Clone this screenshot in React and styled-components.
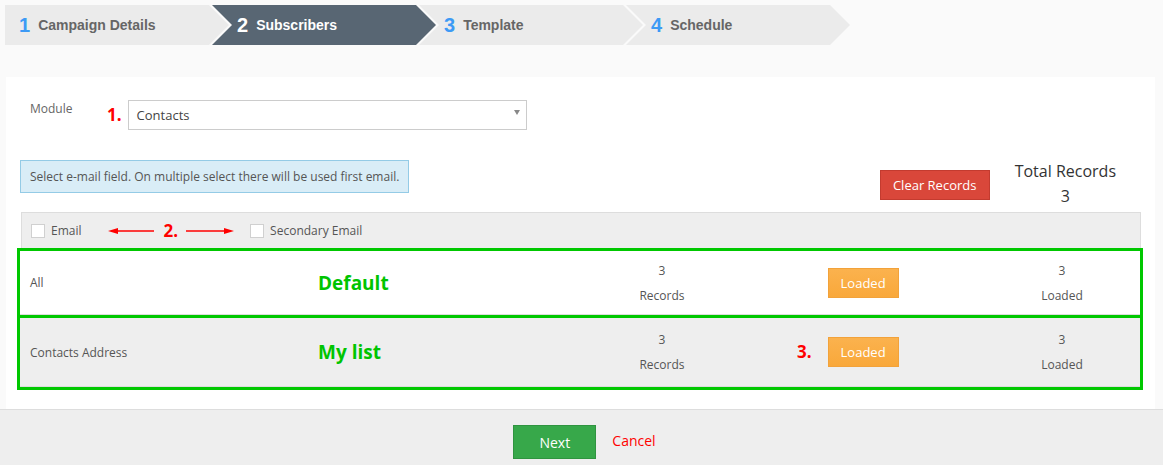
import React from "react";
import styled, { createGlobalStyle } from "styled-components";

const GlobalStyle = createGlobalStyle`
  html, body {
    margin: 0;
    padding: 0;
    background: #fafafa;
    font-family: "Open Sans", "Liberation Sans", Arial, sans-serif;
    color: #555;
  }
  * { box-sizing: border-box; }
`;

const Wizard = styled.div`
  display: flex;
  padding: 5px 0 0 5px;
  height: 45px;
`;

const Step = styled.div`
  width: 224px;
  height: 40px;
  margin-left: ${(p) => (p.$first ? 0 : -17)}px;
  padding-left: ${(p) => (p.$first ? 14 : 25)}px;
  display: flex;
  align-items: center;
  gap: 8px;
  background: ${(p) => (p.$active ? "#586673" : "#ebebeb")};
  clip-path: ${(p) =>
    p.$first
      ? "polygon(0 0, calc(100% - 20px) 0, 100% 50%, calc(100% - 20px) 100%, 0 100%)"
      : "polygon(0 0, calc(100% - 20px) 0, 100% 50%, calc(100% - 20px) 100%, 0 100%, 20px 50%)"};
  font-family: "Liberation Sans", Arial, sans-serif;
`;

const StepNum = styled.span`
  font-size: 20px;
  font-weight: bold;
  color: ${(p) => (p.$active ? "#fff" : "#3d9af5")};
`;

const StepLabel = styled.span`
  font-size: 14px;
  font-weight: bold;
  color: ${(p) => (p.$active ? "#fff" : "#666")};
`;

const Panel = styled.div`
  margin: 32px 8px 0 6px;
  background: #fff;
  padding: 23px 14px 19px 14px;
`;

const ModuleRow = styled.div`
  display: flex;
  align-items: flex-start;
  height: 30px;
  padding-left: 10px;
`;

const FieldLabel = styled.div`
  width: 77px;
  font-size: 12px;
  color: #666;
`;

const Marker = styled.span`
  font-weight: 700;
  font-size: 17px;
  color: #f00;
  line-height: 30px;
  visibility: ${(p) => (p.$hidden ? "hidden" : "visible")};
`;

const Select = styled.div`
  width: 399px;
  height: 30px;
  margin-left: 6px;
  border: 1px solid #ccc;
  display: flex;
  align-items: center;
  justify-content: space-between;
  padding: 0 6px 0 8px;
  font-size: 13px;
  color: #444;
`;

const Caret = styled.span`
  width: 0;
  height: 0;
  border-left: 3.5px solid transparent;
  border-right: 3.5px solid transparent;
  border-top: 5px solid #888;
  margin-top: -6px;
`;

const InfoRow = styled.div`
  display: flex;
  align-items: flex-start;
  height: 52px;
  margin-top: 30px;
`;

const InfoBox = styled.div`
  background: #d9edf7;
  border: 1px solid #94cbe6;
  height: 33px;
  padding: 0 9px;
  display: flex;
  align-items: center;
  font-size: 12px;
  color: #555;
`;

const ClearButton = styled.button`
  margin: 10px 0 0 auto;
  width: 110px;
  height: 30px;
  background: #d9473a;
  border: 1px solid #c33b2f;
  color: #fff;
  font-family: "Open Sans", sans-serif;
  font-size: 13px;
  padding: 0;
`;

const Total = styled.div`
  margin: -1px 25px 0 25px;
  text-align: center;
  white-space: nowrap;
  font-size: 16px;
  line-height: 25px;
  color: #333;
`;

const HeaderRow = styled.div`
  height: 36px;
  background: #eee;
  border: 1px solid #ddd;
  border-bottom: none;
  margin-left: 1px;
  display: flex;
  align-items: center;
  padding-left: 9px;
  font-size: 12px;
  color: #555;
`;

const Check = styled.span`
  width: 14px;
  height: 14px;
  background: #fff;
  border: 1px solid #d0d0d0;
  margin-right: 6px;
`;

const Arrow = styled.svg`
  display: block;
  margin: ${(p) => p.$m};
`;

const ListBox = styled.div`
  border: 3px solid #00c800;
  margin: 0 -2px 0 -3px;
`;

const Row = styled.div`
  display: grid;
  grid-template-columns: 298px 242px 204px 220px 1fr;
  align-items: center;
  height: ${(p) => p.$h}px;
  background: ${(p) => (p.$alt ? "#eee" : "#fff")};
  border-top: ${(p) => (p.$alt ? "3px solid #00c800" : "none")};
  border-bottom: 1px solid #ddd;
  font-size: 12px;
  color: #555;
`;

const Name = styled.div`
  padding-left: 10px;
`;

const ListTag = styled.div`
  font-weight: 700;
  font-size: 19px;
  color: #00c400;
`;

const Stat = styled.div`
  text-align: center;
  line-height: 25px;
`;

const Action = styled.div`
  display: flex;
  align-items: center;
  padding-left: 33px;
  gap: 16px;
`;

const LoadedButton = styled.button`
  width: 71px;
  height: 30px;
  background: linear-gradient(#fbb24e, #f9a83a);
  border: 1px solid #f2a23a;
  color: #fff;
  font-family: "Open Sans", sans-serif;
  font-size: 13px;
  padding: 0;
`;

const Footer = styled.div`
  background: #eee;
  border-top: 1px solid #ddd;
  height: 56px;
  display: flex;
  justify-content: center;
  align-items: flex-start;
  padding-top: 15px;
  gap: 16px;
  padding-left: 6px;
`;

const NextButton = styled.button`
  width: 83px;
  height: 34px;
  background: #37a84a;
  border: 1px solid #2f9440;
  color: #fff;
  font-family: "Open Sans", sans-serif;
  font-size: 14px;
  padding: 0;
`;

const CancelLink = styled.a`
  color: #f00;
  font-size: 14px;
  margin-top: 6px;
`;

const steps = [
  { n: 1, label: "Campaign Details" },
  { n: 2, label: "Subscribers", active: true },
  { n: 3, label: "Template" },
  { n: 4, label: "Schedule" },
];

const lists = [
  { name: "All", tag: "Default", h: 64 },
  { name: "Contacts Address", tag: "My list", h: 72, alt: true, mark: true },
];

function LeftArrow() {
  return (
    <Arrow width="46" height="8" viewBox="0 0 46 8" $m="0 10px 0 26px">
      <line x1="7" y1="4" x2="46" y2="4" stroke="#f00" strokeWidth="1.3" />
      <polygon points="0,4 10,1 10,7" fill="#f00" />
    </Arrow>
  );
}

function RightArrow() {
  return (
    <Arrow width="48" height="8" viewBox="0 0 48 8" $m="0 16px 0 8px">
      <line x1="0" y1="4" x2="41" y2="4" stroke="#f00" strokeWidth="1.3" />
      <polygon points="48,4 38,1 38,7" fill="#f00" />
    </Arrow>
  );
}

export default function App() {
  return (
    <>
      <GlobalStyle />
      <Wizard>
        {steps.map((s, i) => (
          <Step key={s.n} $first={i === 0} $active={s.active}>
            <StepNum $active={s.active}>{s.n}</StepNum>
            <StepLabel $active={s.active}>{s.label}</StepLabel>
          </Step>
        ))}
      </Wizard>
      <Panel>
        <ModuleRow>
          <FieldLabel>Module</FieldLabel>
          <Marker>1.</Marker>
          <Select>
            <span>Contacts</span>
            <Caret />
          </Select>
        </ModuleRow>
        <InfoRow>
          <InfoBox>Select e-mail field. On multiple select there will be used first email.</InfoBox>
          <ClearButton>Clear Records</ClearButton>
          <Total>
            Total Records
            <br />3
          </Total>
        </InfoRow>
        <HeaderRow>
          <Check />
          Email
          <LeftArrow />
          <Marker>2.</Marker>
          <RightArrow />
          <Check />
          Secondary Email
        </HeaderRow>
        <ListBox>
          {lists.map((l) => (
            <Row key={l.name} $h={l.h} $alt={l.alt}>
              <Name>{l.name}</Name>
              <ListTag>{l.tag}</ListTag>
              <Stat>
                3<br />
                Records
              </Stat>
              <Action>
                <Marker $hidden={!l.mark}>3.</Marker>
                <LoadedButton>Loaded</LoadedButton>
              </Action>
              <Stat>
                3<br />
                Loaded
              </Stat>
            </Row>
          ))}
        </ListBox>
      </Panel>
      <Footer>
        <NextButton>Next</NextButton>
        <CancelLink>Cancel</CancelLink>
      </Footer>
    </>
  );
}
